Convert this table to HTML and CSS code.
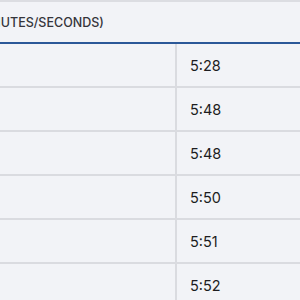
FILE: index.html
```html
<!DOCTYPE html>
<html lang="en">
<head>
    <meta charset="UTF-8">
    <meta name="viewport" content="width=device-width, initial-scale=1.0">
    <title>Lap Times</title>
    <link rel="stylesheet" href="styles.css">
</head>
<body>
    <div class="scroller">
        <table class="times">
            <colgroup>
                <col class="label-col">
                <col class="time-col">
            </colgroup>
            <thead>
                <tr>
                    <th class="label-head">Time (minutes/seconds)</th>
                    <th></th>
                </tr>
            </thead>
            <tbody>
                <tr><td></td><td>5:28</td></tr>
                <tr><td></td><td>5:48</td></tr>
                <tr><td></td><td>5:48</td></tr>
                <tr><td></td><td>5:50</td></tr>
                <tr><td></td><td>5:51</td></tr>
                <tr><td></td><td>5:52</td></tr>
            </tbody>
        </table>
    </div>
</body>
</html>
```

FILE: styles.css
```css
body {
    margin: 0;
    background-color: #f2f3f7;
    font-family: Inter, "Noto Sans", sans-serif;
    color: #1d1d21;
    overflow: hidden;
}

.scroller {
    margin-left: -200px;
}

.times {
    border-collapse: collapse;
    table-layout: fixed;
    width: 500px;
}

.label-col {
    width: 376px;
}

.time-col {
    width: 124px;
}

.times th {
    height: 40px;
    padding: 0 13px;
    text-align: left;
    font-size: 12.5px;
    font-weight: 500;
    text-transform: uppercase;
    white-space: nowrap;
    color: #35353b;
    border-top: 2px solid #dcdde2;
    border-bottom: 2px solid #2c5898;
}

.times .label-head {
    padding-left: 138px;
}

.times td {
    height: 42px;
    padding: 0 13px;
    font-size: 14.5px;
    border-bottom: 2px solid #dadbe0;
}

.times td:first-child {
    border-right: 2px solid #dadbe0;
}
```
